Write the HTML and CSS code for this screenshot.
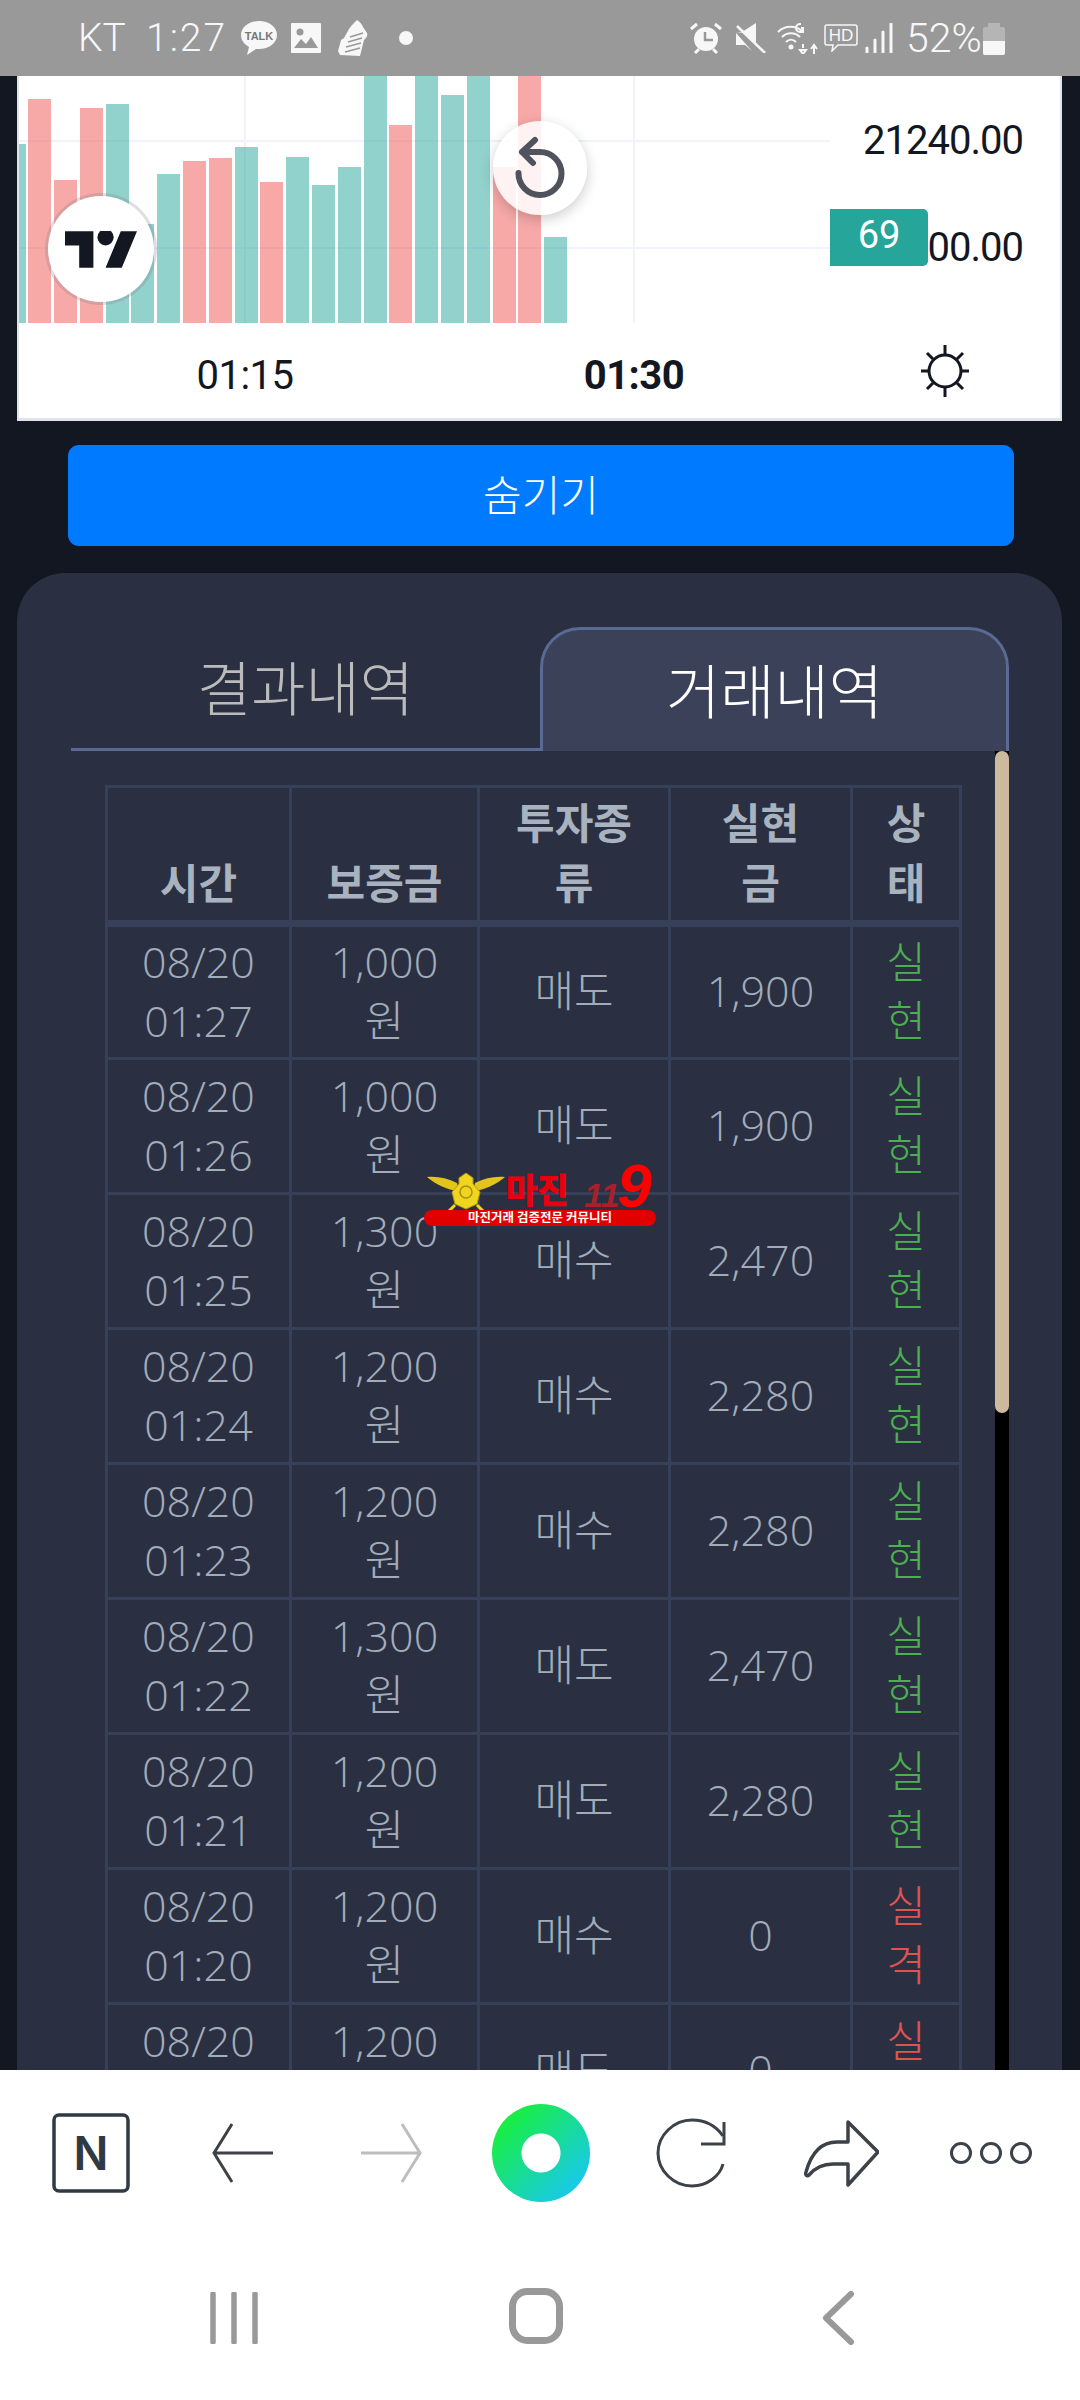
FILE: index.html
```html
<!DOCTYPE html>
<html lang="ko">
<head>
  <meta charset="UTF-8">
  <title>거래내역</title>
  <meta name="viewport" content="width=device-width, initial-scale=1.0">
  <link rel="stylesheet" href="styles.css">
</head>
<body>
  <div class="page">
    <div class="statusbar">
      <span class="carrier">KT</span>
      <span class="clock">1:27</span>
      <svg class="st-talk" width="36" height="34" viewBox="0 0 36 34">
        <path d="M18 0C8 0 0 6 0 14c0 5 3 9 8 12l-2 8 9-6h3c10 0 18-6 18-14S28 0 18 0z" fill="#f7f7f7"/>
        <text x="18" y="19" text-anchor="middle" class="talk-text">TALK</text>
      </svg>
      <svg class="st-img" width="30" height="30" viewBox="0 0 30 30">
        <path fill-rule="evenodd" d="M1 0h28a1 1 0 0 1 1 1v28a1 1 0 0 1-1 1H1a1 1 0 0 1-1-1V1a1 1 0 0 1 1-1zM3 25l7-9 5 5 5-7 7 11z" fill="#f7f7f7"/>
        <circle cx="9" cy="9" r="3.5" fill="#999"/>
      </svg>
      <svg class="st-shoe" width="30" height="36" viewBox="0 0 30 36">
        <path d="M19 0c3 2 5 4 6 7l4 6c1 3-1 5-3 7l-4 16-20-1-2-4 2-7 1-4 3-2 5-9 3-4z" fill="#f7f7f7"/>
        <path d="M7 32l15-4M8 27l15-4M10 22l14-4M12 17l13-4" stroke="#999" stroke-width="1.5"/>
      </svg>
      <span class="st-dot"></span>
      <span class="st-gap"></span>
      <svg class="st-alarm" width="34" height="32" viewBox="0 0 34 32">
        <circle cx="17" cy="17" r="12" fill="#f7f7f7"/>
        <path d="M2 7l6-5M32 7l-6-5M6 31l4-4M28 31l-4-4" stroke="#f7f7f7" stroke-width="3"/>
        <path d="M16 10v8h8" stroke="#999" stroke-width="2.5" fill="none"/>
      </svg>
      <svg class="st-mute" width="30" height="30" viewBox="0 0 30 30">
        <path d="M0 9h6l14-9v21L9 10zM0 10l16 18-7-6H0z" fill="#f7f7f7"/>
        <path d="M1 3l28 27" stroke="#f7f7f7" stroke-width="2.5"/>
      </svg>
      <svg class="st-wifi" width="42" height="32" viewBox="0 0 42 32">
        <g fill="none" stroke="#f7f7f7" stroke-width="2">
          <path d="M1 10c7-7 18-7 25 0M5 15c5-5 13-5 18 0M9 20c3-3 7-3 10 0"/>
          <path d="M26 26v-4m0 10l-3-4h6zM37 32v-8m-3 3l3-4 3 4M24 2h-1a3 3 0 0 0 0 8h3v-4h-2"/>
        </g>
        <circle cx="14" cy="25" r="2.5" fill="#f7f7f7"/>
      </svg>
      <svg class="st-hd" width="34" height="28" viewBox="0 0 34 28">
        <path d="M3 1h28a2 2 0 0 1 2 2v16a2 2 0 0 1-2 2H14l-6 6 1-6H3a2 2 0 0 1-2-2V3a2 2 0 0 1 2-2z" fill="none" stroke="#f7f7f7" stroke-width="1.5"/>
        <text x="17" y="17" text-anchor="middle" class="hd-text">HD</text>
      </svg>
      <svg class="st-signal" width="28" height="30" viewBox="0 0 28 30">
        <path d="M2 25v5M10 17v13M18 9v21M26 1v29" stroke="#f7f7f7" stroke-width="3" stroke-linecap="round"/>
      </svg>
      <span class="battery-text">52%</span>
      <span class="battery"><span class="battery-fill"></span></span>
    </div>

    <div class="content">
      <div class="chart">
        <div class="chart-body">
          <div class="plot">
            <span class="hline hline-1"></span>
            <span class="hline hline-2"></span>
            <span class="vline vline-1"></span>
            <span class="vline vline-2"></span>
            <div class="bars">
              <span class="bar up" style="height:179px"></span>
              <span class="bar down" style="height:224px"></span>
              <span class="bar down" style="height:143px"></span>
              <span class="bar down" style="height:215px"></span>
              <span class="bar up" style="height:219px"></span>
              <span class="bar up" style="height:99px"></span>
              <span class="bar up" style="height:149px"></span>
              <span class="bar down" style="height:162px"></span>
              <span class="bar down" style="height:165px"></span>
              <span class="bar up" style="height:176px"></span>
              <span class="bar down" style="height:141px"></span>
              <span class="bar up" style="height:166px"></span>
              <span class="bar up" style="height:138px"></span>
              <span class="bar up" style="height:156px"></span>
              <span class="bar up" style="height:260px"></span>
              <span class="bar down" style="height:198px"></span>
              <span class="bar up" style="height:260px"></span>
              <span class="bar up" style="height:228px"></span>
              <span class="bar up" style="height:260px"></span>
              <span class="bar down" style="height:156px"></span>
              <span class="bar down" style="height:260px"></span>
              <span class="bar up" style="height:86px"></span>
            </div>
          </div>
          <div class="scale">
            <div class="price">21240.00</div>
            <div class="price">00.00</div>
            <div class="countdown">69</div>
          </div>
        </div>
        <div class="axis">
          <span class="tick">01:15</span>
          <span class="tick tick-main">01:30</span>
          <svg class="sun" width="50" height="52" viewBox="0 0 50 52">
            <circle cx="25" cy="26" r="16" fill="none" stroke="#131722" stroke-width="3"/>
            <path d="M25 0v9M25 43v9M1 26h8M41 26h8M7 8l6 6M43 8l-6 6M7 44l6-6M43 44l-6-6" stroke="#131722" stroke-width="3"/>
          </svg>
        </div>
        <div class="tv-logo">
          <svg width="73" height="37" viewBox="0 4 36 18">
            <path d="M14 22H7V11H0V4h14v18zM28 22h-8l7.500-18h8L28 22z" fill="#131722"/>
            <circle cx="20" cy="7" r="4" fill="#131722"/>
          </svg>
        </div>
        <div class="reset">
          <svg width="54" height="64" viewBox="0 0 54 64">
            <path d="M22 4L9 16l11 11M9 16h18a21.500 21.500 0 1 1-21.500 21" fill="none" stroke="#50535e" stroke-width="6" stroke-linecap="round" stroke-linejoin="round"/>
          </svg>
        </div>
      </div>

      <button class="hide-btn">숨기기</button>

      <div class="panel">
        <div class="tabs">
          <div class="tab">결과내역</div>
          <div class="tab tab-active">거래내역</div>
        </div>
        <div class="scroller">
          <div class="scroll-body">
            <table class="history">
              <colgroup>
                <col class="c-time"><col class="c-margin"><col class="c-type"><col class="c-profit"><col class="c-state">
              </colgroup>
              <thead>
                <tr><th>시간</th><th>보증금</th><th>투자종<br>류</th><th>실현<br>금</th><th>상<br>태</th></tr>
              </thead>
              <tbody>
                <tr><td>08/20<br>01:27</td><td>1,000<br>원</td><td>매도</td><td>1,900</td><td class="win">실<br>현</td></tr>
                <tr><td>08/20<br>01:26</td><td>1,000<br>원</td><td>매도</td><td>1,900</td><td class="win">실<br>현</td></tr>
                <tr><td>08/20<br>01:25</td><td>1,300<br>원</td><td>매수</td><td>2,470</td><td class="win">실<br>현</td></tr>
                <tr><td>08/20<br>01:24</td><td>1,200<br>원</td><td>매수</td><td>2,280</td><td class="win">실<br>현</td></tr>
                <tr><td>08/20<br>01:23</td><td>1,200<br>원</td><td>매수</td><td>2,280</td><td class="win">실<br>현</td></tr>
                <tr><td>08/20<br>01:22</td><td>1,300<br>원</td><td>매도</td><td>2,470</td><td class="win">실<br>현</td></tr>
                <tr><td>08/20<br>01:21</td><td>1,200<br>원</td><td>매도</td><td>2,280</td><td class="win">실<br>현</td></tr>
                <tr><td>08/20<br>01:20</td><td>1,200<br>원</td><td>매수</td><td>0</td><td class="lose">실<br>격</td></tr>
                <tr><td>08/20<br>01:19</td><td>1,200<br>원</td><td>매도</td><td>0</td><td class="lose">실<br>격</td></tr>
              </tbody>
            </table>
          </div>
          <div class="scroll-track"><div class="scroll-thumb"></div></div>
        </div>
      </div>
    </div>

    <div class="toolbar">
      <div class="tool">
        <svg width="80" height="80" viewBox="0 0 80 80">
          <rect x="3" y="2" width="74" height="76" rx="5" fill="none" stroke="#2f3a45" stroke-width="3.500"/>
          <text x="40" y="57" text-anchor="middle" class="n-mark">N</text>
        </svg>
      </div>
      <div class="tool tool-back">
        <svg width="64" height="60" viewBox="0 0 64 60">
          <path d="M62 30H3M21 1L3 30l18 29" fill="none" stroke="#3c4248" stroke-width="3"/>
        </svg>
      </div>
      <div class="tool">
        <svg width="64" height="60" viewBox="0 0 64 60">
          <path d="M2 30h59M43 1l18 29-18 29" fill="none" stroke="#bdbdbd" stroke-width="3"/>
        </svg>
      </div>
      <div class="tool">
        <div class="whale"></div>
      </div>
      <div class="tool">
        <svg width="72" height="70" viewBox="0 0 72 70">
          <path d="M68 46C65 58 52 68 37 68 19 68 3 53 3 35S19 2 37 2c13 0 24 6 31 16" fill="none" stroke="#3c4248" stroke-width="3"/>
          <path d="M69 4v22H46" fill="none" stroke="#3c4248" stroke-width="3"/>
        </svg>
      </div>
      <div class="tool">
        <svg width="76" height="68" viewBox="0 0 76 68">
          <path d="M45 3l30 30-30 33V45H30c-10 0-18 4-24 11-2 2-4 0-3-3 5-18 15-30 31-30h11z" fill="none" stroke="#3c4248" stroke-width="3.500" stroke-linejoin="round"/>
        </svg>
      </div>
      <div class="tool">
        <svg width="82" height="24" viewBox="0 0 82 24">
          <circle cx="11" cy="12" r="9.500" fill="none" stroke="#3c4248" stroke-width="3"/>
          <circle cx="41" cy="12" r="9.500" fill="none" stroke="#3c4248" stroke-width="3"/>
          <circle cx="71" cy="12" r="9.500" fill="none" stroke="#3c4248" stroke-width="3"/>
        </svg>
      </div>
    </div>

    <div class="sysnav">
      <svg width="48" height="52" viewBox="0 0 48 52">
        <path d="M3 2v48M24 2v48M45 2v48" stroke="#999" stroke-width="5.500" stroke-linecap="round"/>
      </svg>
      <svg class="sys-home" width="54" height="56" viewBox="0 0 54 56">
        <rect x="3.500" y="3.500" width="47" height="49" rx="15" fill="none" stroke="#999" stroke-width="7"/>
      </svg>
      <svg width="34" height="54" viewBox="0 0 34 54">
        <path d="M30 3L5 27l25 24" fill="none" stroke="#999" stroke-width="6" stroke-linecap="round" stroke-linejoin="round"/>
      </svg>
    </div>

    <div class="watermark">
      <svg class="emblem" width="78" height="38" viewBox="0 0 78 38">
        <path d="M0 4c10-1 20 1 30 6l2 8C20 17 8 11 0 4zM78 4c-10-1-20 1-30 6l-2 8c12-1 24-7 32-14z" fill="#e2c41c"/>
        <path d="M39 0l7 5v6l7 8-3 12-11 5-11-5-3-12 7-8V5z" fill="#f0d51e" stroke="#b59a10" stroke-width="1"/>
        <circle cx="39" cy="19" r="6" fill="none" stroke="#a88e10" stroke-width="1.500"/>
        <path d="M22 38l6-6M56 38l-6-6" stroke="#f0d51e" stroke-width="3"/>
      </svg>
      <span class="wm-name">마진</span><span class="wm-num"><span class="wm-ones">11</span>9</span>
      <div class="wm-bar">마진거래 검증전문 커뮤니티</div>
    </div>
  </div>
</body>
</html>
```

FILE: styles.css
```css
* {
  box-sizing: border-box;
}

body {
  margin: 0;
  background: #131722;
  font-family: "Roboto", "Noto Sans CJK KR", sans-serif;
}

.page {
  position: relative;
  display: flex;
  flex-direction: column;
  width: 1080px;
  height: 2400px;
  overflow: hidden;
}

/* status bar */
.statusbar {
  display: flex;
  align-items: center;
  flex: none;
  height: 76px;
  padding-left: 78px;
  background: #999;
  color: #f7f7f7;
  font-weight: 300;
}

.statusbar svg {
  flex: none;
}

.carrier {
  font-size: 39px;
  width: 68px;
}

.clock {
  font-size: 39px;
  width: 95px;
  letter-spacing: 2px;
}

.talk-text {
  font-family: "Liberation Sans", sans-serif;
  font-size: 11px;
  font-weight: 700;
  fill: #777;
}

.hd-text {
  font-family: "Liberation Sans", sans-serif;
  font-size: 17px;
  fill: #f7f7f7;
}

.st-img {
  margin-left: 14px;
}

.st-shoe {
  margin-left: 17px;
}

.st-dot {
  width: 14px;
  height: 14px;
  margin-left: 31px;
  border-radius: 50%;
  background: #f7f7f7;
}

.st-gap {
  width: 276px;
}

.st-mute {
  margin-left: 13px;
}

.st-wifi {
  margin-left: 11px;
}

.st-hd {
  margin-left: 5px;
}

.st-signal {
  margin-left: 7px;
}

.battery-text {
  margin-left: 13px;
  font-size: 41px;
  width: 77px;
}

.battery {
  position: relative;
  width: 22px;
  height: 28px;
  margin-top: 5px;
  background: #b5b5b5;
  border-radius: 2px;
}

.battery::before {
  content: "";
  position: absolute;
  top: -4px;
  left: 5px;
  width: 12px;
  height: 4px;
  background: #b5b5b5;
}

.battery-fill {
  position: absolute;
  left: 0;
  right: 0;
  bottom: 0;
  height: 14px;
  background: #f7f7f7;
  border-radius: 0 0 2px 2px;
}

/* page body */
.content {
  flex: 1;
  min-height: 0;
  overflow: hidden;
  padding: 0 18px 0 17px;
}

.chart {
  position: relative;
  height: 345px;
  overflow: hidden;
  background: #fff;
  border: 2px solid #e0e3eb;
  border-width: 0 2px 3px;
}

.chart-body {
  display: flex;
  height: 247px;
}

.plot {
  position: relative;
  flex: none;
  width: 811px;
  overflow: hidden;
}

.hline {
  position: absolute;
  left: 0;
  right: 0;
  height: 2px;
  background: #f0f3fa;
}

.hline-1 {
  top: 64px;
}

.hline-2 {
  top: 171px;
}

.vline {
  position: absolute;
  top: 0;
  bottom: 0;
  width: 2px;
  background: #f0f3fa;
}

.vline-1 {
  left: 225px;
}

.vline-2 {
  left: 614px;
}

.bars {
  position: relative;
  display: flex;
  align-items: flex-end;
  gap: 2.800px;
  height: 100%;
  margin-left: -16.500px;
}

.bar {
  flex: none;
  width: 23px;
}

.bar.up {
  background: rgba(38, 166, 154, 0.5);
}

.bar.down {
  background: rgba(239, 83, 80, 0.5);
}

.scale {
  position: relative;
  flex: 1;
  padding: 40px 37px 0 0;
  text-align: right;
  color: #131722;
  font-size: 40px;
  line-height: 50px;
  letter-spacing: -1px;
}

.price + .price {
  margin-top: 57px;
}

.countdown {
  position: absolute;
  top: 133px;
  left: 0;
  width: 98px;
  height: 57px;
  background: #26a69a;
  border-radius: 0 5px 5px 0;
  color: #fff;
  text-align: center;
  font-size: 38px;
  line-height: 52px;
  letter-spacing: 0;
}

.axis {
  display: flex;
  align-items: center;
  height: 95px;
  color: #131722;
  font-size: 40px;
}

.tick {
  width: 110px;
  margin-left: 171px;
  padding-top: 9px;
  text-align: center;
  letter-spacing: -0.5px;
}

.tick-main {
  margin-left: 279px;
  font-weight: 700;
}

.sun {
  margin-left: 231px;
}

.tv-logo {
  position: absolute;
  top: 120px;
  left: 29px;
  display: flex;
  align-items: center;
  justify-content: center;
  width: 106px;
  height: 106px;
  border-radius: 50%;
  background: #fff;
  box-shadow: 0 0 0 3px rgba(120, 123, 134, 0.25);
}

.reset {
  position: absolute;
  top: 45px;
  left: 474px;
  display: flex;
  align-items: center;
  justify-content: center;
  width: 94px;
  height: 94px;
  border-radius: 50%;
  background: rgba(255, 255, 255, 0.85);
  box-shadow: 0 4px 14px rgba(0, 0, 0, 0.2);
}

.hide-btn {
  display: block;
  width: 946px;
  height: 101px;
  margin: 24px 0 0 51px;
  padding: 0 0 6px;
  border: 0;
  border-radius: 11px;
  background: #007bff;
  color: #fff;
  font-family: inherit;
  font-size: 42px;
  font-weight: 300;
}

/* history panel */
.panel {
  height: 1500px;
  margin-top: 27px;
  padding: 54px 53px 0 54px;
  border-radius: 48px 48px 0 0;
  background: #2a3042;
}

.tabs {
  display: flex;
  height: 124px;
}

.tab {
  flex: none;
  width: 469px;
  padding-top: 26px;
  border-bottom: 3px solid #5a6a94;
  color: #bbb;
  text-align: center;
  font-size: 59px;
  font-weight: 300;
  line-height: 76px;
}

.tab-active {
  border: 3px solid #5a6a94;
  border-bottom: 0;
  border-radius: 40px 40px 0 0;
  background: #3a4159;
  color: #fff;
}

.scroller {
  display: flex;
  height: 1400px;
}

.scroll-body {
  flex: 1;
  padding: 34px 0 0 34px;
}

.scroll-track {
  flex: none;
  width: 14px;
  background: #000;
}

.scroll-thumb {
  height: 662px;
  border-radius: 7px;
  background: #cdb99d;
}

.history {
  width: 854px;
  table-layout: fixed;
  border-collapse: collapse;
  color: #a3adba;
  text-align: center;
  font-family: "Open Sans", "Noto Sans CJK KR", sans-serif;
  font-size: 43px;
  font-weight: 300;
  line-height: 59px;
}

.c-time {
  width: 184px;
}

.c-margin {
  width: 188px;
}

.c-type {
  width: 191px;
}

.c-profit {
  width: 182px;
}

.c-state {
  width: 109px;
}

.history th,
.history td {
  padding: 0;
  border: 3px solid #374059;
}

.history th {
  height: 137px;
  padding-bottom: 7px;
  border-bottom-width: 7px;
  vertical-align: bottom;
  color: #a9b3bf;
  font-size: 42px;
  font-weight: 700;
  line-height: 60px;
}

.history td {
  height: 135px;
  padding-bottom: 3px;
}

.history .win {
  color: #4caf50;
}

.history .lose {
  color: #e0534f;
}

/* browser toolbar */
.toolbar {
  display: grid;
  grid-template-columns: repeat(7, 150px);
  align-items: center;
  flex: none;
  height: 166px;
  padding-left: 16px;
  background: #fff;
}

.tool {
  display: flex;
  justify-content: center;
}

.tool-back {
  padding-left: 4px;
}

.n-mark {
  font-family: "Inter", sans-serif;
  font-size: 46px;
  font-weight: 600;
  fill: #2f3a45;
}

.whale {
  width: 98px;
  height: 98px;
  border-radius: 50%;
  background:
    radial-gradient(circle, #fff 19px, transparent 20px),
    linear-gradient(135deg, #18f03a 12%, #18c8f0 88%);
}

.sysnav {
  display: grid;
  grid-template-columns: repeat(3, 302px);
  justify-items: center;
  align-items: center;
  flex: none;
  height: 164px;
  padding-left: 83px;
  background: #fff;
}

.sys-home {
  margin-bottom: 5px;
}

/* watermark */
.watermark {
  position: absolute;
  top: 1172px;
  left: 424px;
  width: 232px;
  height: 54px;
}

.emblem {
  position: absolute;
  top: 1px;
  left: 3px;
}

.wm-name {
  position: absolute;
  top: -3px;
  left: 82px;
  color: #e8000f;
  font-size: 34px;
  font-weight: 700;
  line-height: 44px;
  white-space: nowrap;
  -webkit-text-stroke: 1px #e8000f;
}

.wm-num {
  position: absolute;
  top: -14px;
  left: 160px;
  color: #f00;
  font-family: "Liberation Sans", sans-serif;
  font-size: 62px;
  font-style: italic;
  font-weight: 700;
  line-height: 56px;
  white-space: nowrap;
}

.wm-ones {
  margin-right: -2px;
  color: #a8202a;
  font-size: 34px;
}

.wm-bar {
  position: absolute;
  left: 0;
  right: 0;
  bottom: 0;
  height: 16px;
  border-radius: 8px;
  background: #e00000;
  color: #fff;
  text-align: center;
  font-size: 12.500px;
  font-weight: 700;
  line-height: 16px;
}
```
